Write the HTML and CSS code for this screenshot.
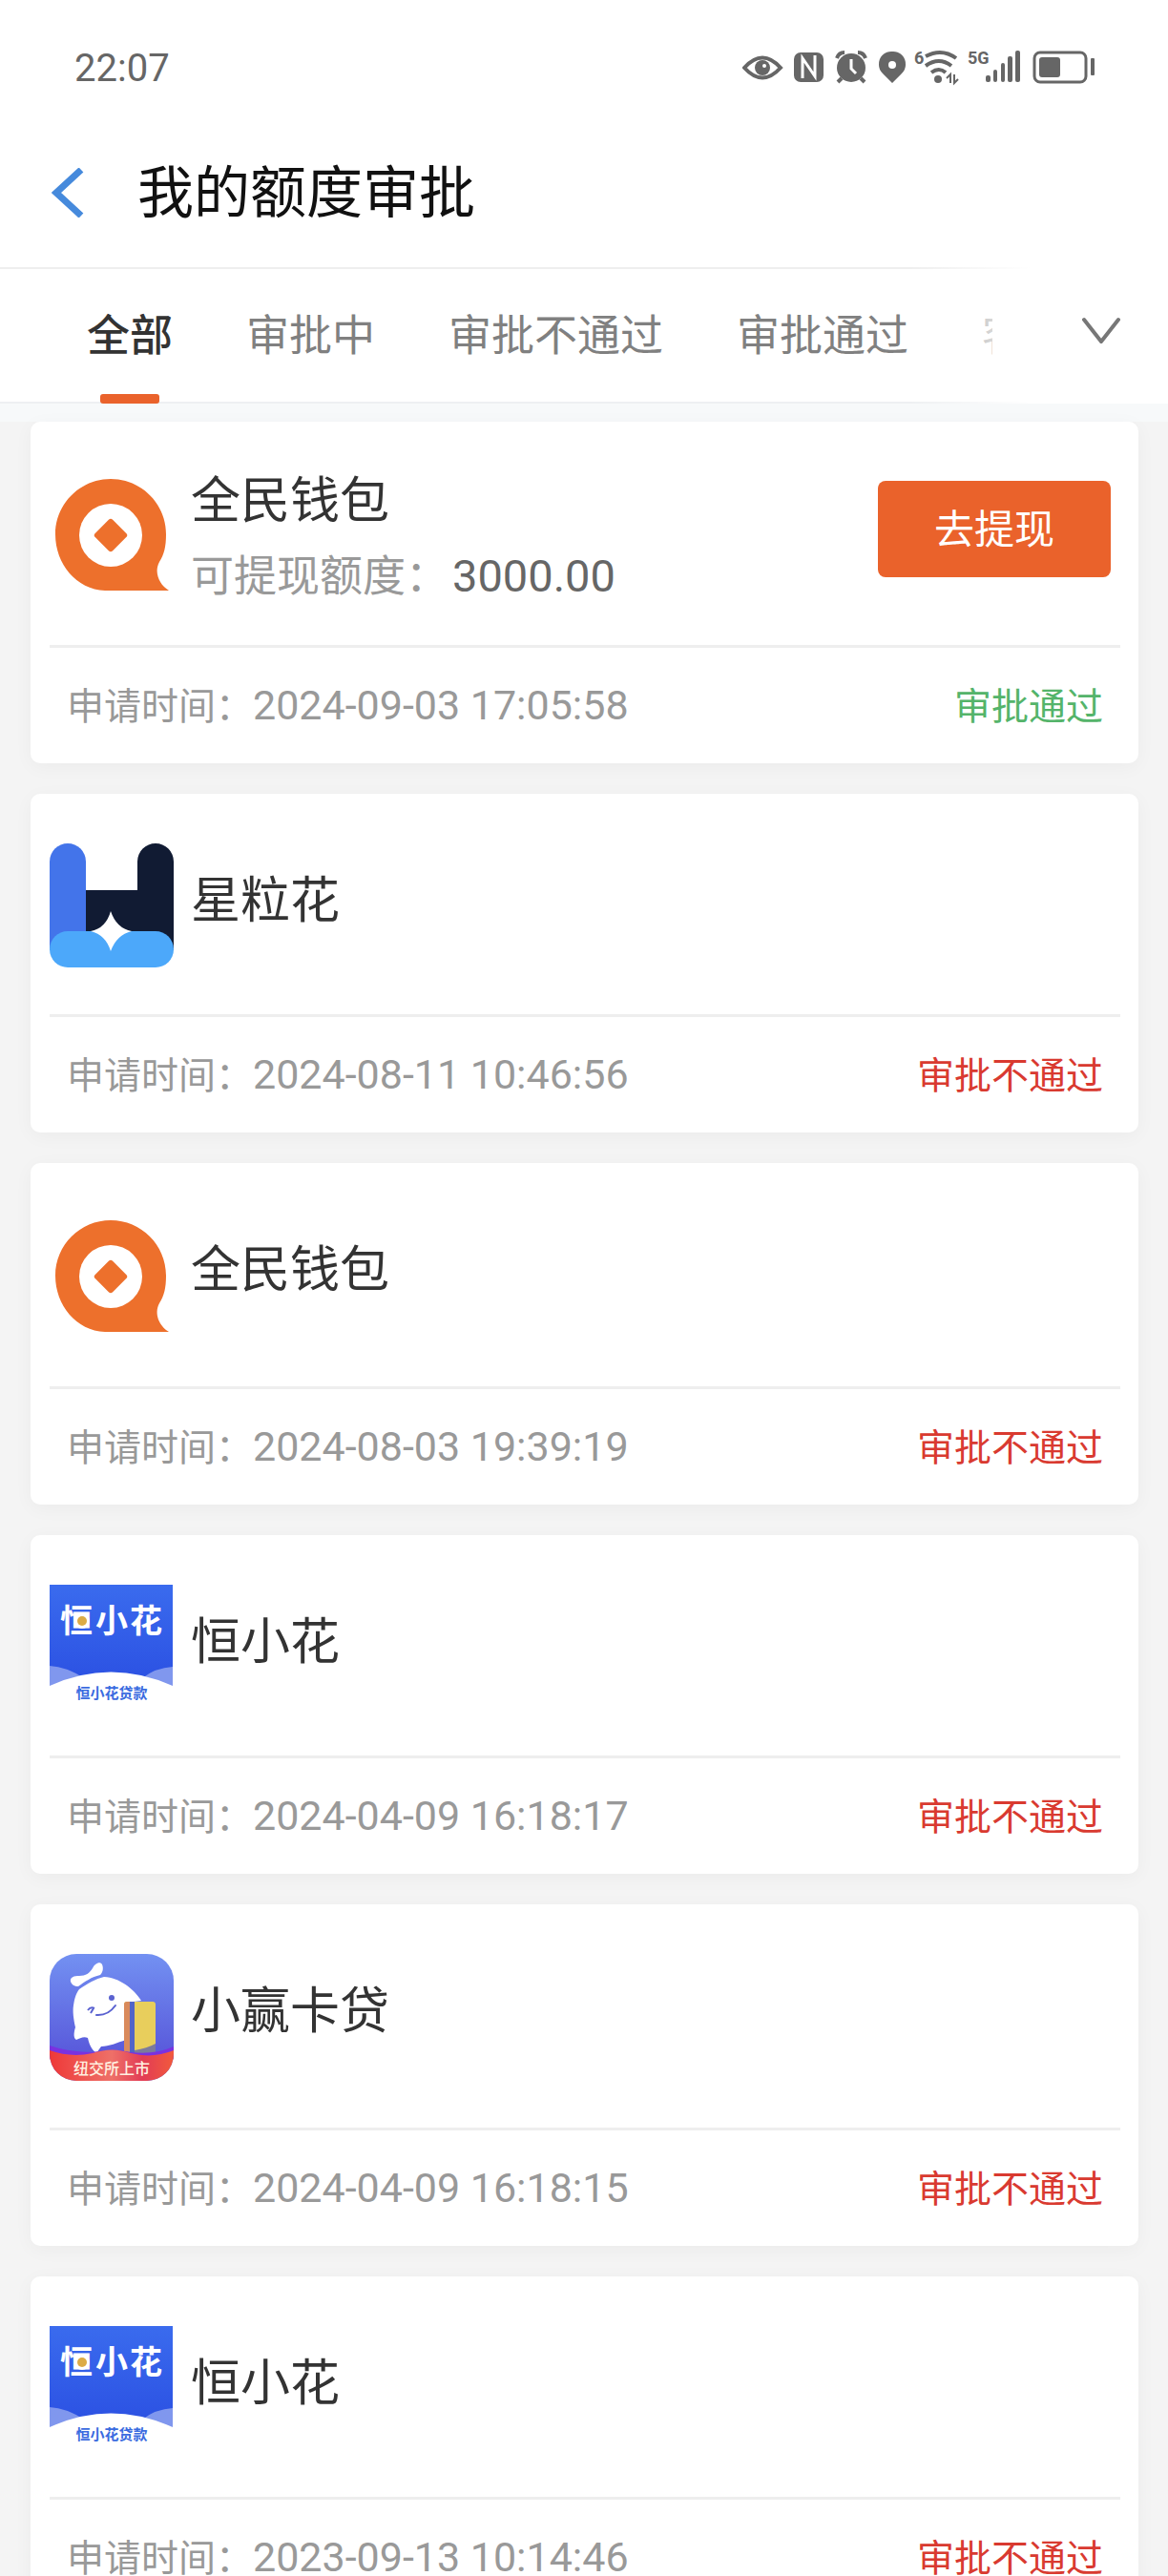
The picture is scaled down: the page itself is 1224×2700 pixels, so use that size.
FILE: index.html
```html
<!DOCTYPE html>
<html lang="zh-CN">

<head>
    <meta charset="UTF-8">
    <meta name="viewport" content="width=device-width, initial-scale=1">
    <title>我的额度审批</title>
    <link rel="stylesheet" href="styles.css">
</head>

<body>
    <!-- shared logos -->
    <svg class="defs" width="0" height="0" aria-hidden="true">
        <symbol id="logo-qm" viewBox="0 0 130 133">
            <path d="M64 8C96 8 122 34 122 66C122 79 120 87 115 95C109 106 115 119 125 125H58C28 124 6 97 6 66C6 34 32 8 64 8Z" fill="#ed702c"/>
            <circle cx="64" cy="67" r="33" fill="#fff"/>
            <rect x="51" y="54" width="26" height="26" rx="3" transform="rotate(45 64 67)" fill="#ed702c"/>
        </symbol>
        <symbol id="logo-xl" viewBox="0 0 130 130">
            <path d="M0 19A19 19 0 0 1 38 19V112H0Z" fill="#4374ea"/>
            <path d="M38 49H92V19A19 19 0 0 1 130 19V112H38Z" fill="#111b33"/>
            <rect y="92" width="130" height="38" rx="19" fill="#4ca8fa"/>
            <path d="M64 71Q70 89 86 92Q70 96 64 113Q59 96 43 92Q59 89 64 71Z" fill="#fff"/>
        </symbol>
        <symbol id="logo-hx" viewBox="0 0 130 130">
            <linearGradient id="hx-bg" x1="0" y1="0" x2="0" y2="1">
                <stop offset="0" stop-color="#3a6bee"/>
                <stop offset="1" stop-color="#2b50e2"/>
            </linearGradient>
            <rect width="129" height="106" fill="url(#hx-bg)"/>
            <path d="M0 85Q18 86 36 98V108H0Z" fill="#8097ee"/>
            <path d="M129 86Q111 87 97 98V108H129Z" fill="#8097ee"/>
            <path d="M0 106Q64 77 129 106V130H0Z" fill="#fff"/>
        </symbol>
        <symbol id="logo-xy" viewBox="0 0 130 133">
            <linearGradient id="xy-bg" x1="0" y1="0" x2="0" y2="1">
                <stop offset="0" stop-color="#7391f2"/>
                <stop offset="0.75" stop-color="#5a5cdc"/>
            </linearGradient>
            <linearGradient id="xy-red" x1="0" y1="0" x2="1" y2="0">
                <stop offset="0" stop-color="#ee3838"/>
                <stop offset="0.5" stop-color="#ee7068"/>
                <stop offset="0.75" stop-color="#e23c55"/>
                <stop offset="1" stop-color="#f25a3c"/>
            </linearGradient>
            <clipPath id="xy-clip"><rect width="130" height="133" rx="28"/></clipPath>
            <g clip-path="url(#xy-clip)">
                <rect width="130" height="133" fill="url(#xy-bg)"/>
                <path d="M22 29C21 24 26 23 31 23C38 23 42 20 45 15C47 10 53 7 55 11C57 16 55 20 53 22C44 24 37 29 30 34C26 34 23 32 22 29Z" fill="#fff"/>
                <path d="M31 37C40 31 48 26 57 24C73 25 88 36 96 49L80 51V90C71 93 62 97 54 97L49 104C45 101 42 97 40 88C36 86 32 88 28 90C24 88 26 80 27 77C25 68 24 60 25 54C26 46 28 41 31 37Z" fill="#fff"/>
                <path d="M49 64Q61 65 69 54" fill="none" stroke="#5a62d0" stroke-width="2" stroke-linecap="round"/>
                <path d="M40 59Q43 55 47 57M46 57L43 62" fill="none" stroke="#5a62d0" stroke-width="2"/>
                <circle cx="65" cy="46" r="3" fill="#5a62d0"/>
                <rect x="78" y="50" width="33" height="60" rx="3" fill="#e8ce5c"/>
                <path d="M81 50H85V110H78V53Q78 50 81 50Z" fill="#d98a5c"/>
                <path d="M84 50H89V110H84Z" fill="#5264c8"/>
                <path d="M89 101Q102 99 111 94V110H89Z" fill="#7c7b9c"/>
                <path d="M0 96Q20 103 45 103Q66 98 85 103Q110 106 130 97V110H0Z" fill="#7a31e0"/>
                <path d="M0 101Q22 109 45 104Q66 97 85 104Q108 110 130 101V133H0Z" fill="url(#xy-red)"/>
            </g>
        </symbol>
    </svg>

    <div class="status-bar">
        <span class="clock">22:07</span>
        <svg class="status-icons" width="372" height="40" viewBox="0 0 372 40" fill="#666">
            <!-- eye -->
            <path d="M2 20Q21 -1 40 20Q21 41 2 20Z" fill="none" stroke="#666" stroke-width="4"/>
            <circle cx="21" cy="20" r="8"/>
            <circle cx="23" cy="18" r="2" fill="#fff"/>
            <!-- nfc -->
            <rect x="54" y="4" width="31" height="31" rx="7"/>
            <path d="M63 31V10L76 29V7" fill="none" stroke="#fff" stroke-width="3"/>
            <!-- alarm -->
            <circle cx="114" cy="20" r="15"/>
            <path d="M99 10Q101 4 107 4M121 4Q127 4 129 10M104 31L100 35M124 31L128 35" fill="none" stroke="#666" stroke-width="4"/>
            <path d="M114 11V21L119 26" fill="none" stroke="#fff" stroke-width="3"/>
            <!-- location -->
            <path d="M157 3A13 13 0 0 1 171 17Q171 22 167 26L157 36L147 26Q143 22 143 17A13 13 0 0 1 157 3Z"/>
            <circle cx="157" cy="17" r="4" fill="#fff"/>
            <!-- wifi -->
            <text x="180" y="16" class="net">6</text>
            <path d="M192 8Q209 -1 224 10M192 18Q206 8 219 18M198 25Q206 19 213 25" fill="none" stroke="#666" stroke-width="4"/>
            <circle cx="205" cy="32" r="4"/>
            <path d="M214 31L218 27V36M222 27V36L226 32" fill="none" stroke="#666" stroke-width="2"/>
            <!-- mobile signal -->
            <text x="236" y="16" class="net">5G</text>
            <rect x="255" y="28" width="5" height="7" rx="2"/>
            <rect x="263" y="22" width="4" height="13" rx="2"/>
            <rect x="271" y="15" width="4" height="20" rx="2"/>
            <rect x="278" y="8" width="5" height="27" rx="2"/>
            <rect x="286" y="2" width="5" height="33" rx="2"/>
            <!-- battery -->
            <rect x="306" y="4" width="54" height="31" rx="6" fill="none" stroke="#666" stroke-width="3"/>
            <rect x="311" y="9" width="22" height="21" rx="3"/>
            <rect x="365" y="10" width="4" height="18" rx="1"/>
        </svg>
    </div>

    <header class="header">
        <button class="back" aria-label="返回">
            <svg width="36" height="52" viewBox="0 0 36 52"><path d="M31 2L5 26L31 50" fill="none" stroke="#468adc" stroke-width="7"/></svg>
        </button>
        <h1>我的额度审批</h1>
    </header>

    <nav class="tabs">
        <div class="tab-list">
            <a href="#" class="tab active">全部</a>
            <a href="#" class="tab">审批中</a>
            <a href="#" class="tab">审批不通过</a>
            <a href="#" class="tab">审批通过</a>
            <a href="#" class="tab">客户取消</a>
        </div>
        <button class="more" aria-label="展开">
            <svg width="42" height="28" viewBox="0 0 42 28"><path d="M3 3L21 26L39 3" fill="none" stroke="#777" stroke-width="4" stroke-linecap="round"/></svg>
        </button>
    </nav>

    <main class="list">
        <section class="card">
            <div class="card-body quota">
                <svg class="logo tall"><use href="#logo-qm"/></svg>
                <div class="info">
                    <h2>全民钱包</h2>
                    <p>可提现额度：<span class="amount">3000.00</span></p>
                </div>
                <button class="withdraw">去提现</button>
            </div>
            <div class="card-foot">
                <span>申请时间：<time>2024-09-03 17:05:58</time></span>
                <span class="pass">审批通过</span>
            </div>
        </section>

        <section class="card">
            <div class="card-body">
                <svg class="logo"><use href="#logo-xl"/></svg>
                <div class="info">
                    <h2>星粒花</h2>
                </div>
            </div>
            <div class="card-foot">
                <span>申请时间：<time>2024-08-11 10:46:56</time></span>
                <span class="fail">审批不通过</span>
            </div>
        </section>

        <section class="card">
            <div class="card-body">
                <svg class="logo tall"><use href="#logo-qm"/></svg>
                <div class="info">
                    <h2>全民钱包</h2>
                </div>
            </div>
            <div class="card-foot">
                <span>申请时间：<time>2024-08-03 19:39:19</time></span>
                <span class="fail">审批不通过</span>
            </div>
        </section>

        <section class="card">
            <div class="card-body">
                <svg class="logo">
                    <use href="#logo-hx"/>
                    <text x="28" y="50" class="hx-name">恒</text>
                    <text x="65" y="50" class="hx-name">小</text>
                    <text x="101" y="50" class="hx-name">花</text>
                    <circle cx="34" cy="38" r="8" fill="#fff"/>
                    <circle cx="34" cy="38" r="5" fill="#dcab45"/>
                    <text x="65" y="119" class="hx-sub">恒小花贷款</text>
                </svg>
                <div class="info">
                    <h2>恒小花</h2>
                </div>
            </div>
            <div class="card-foot">
                <span>申请时间：<time>2024-04-09 16:18:17</time></span>
                <span class="fail">审批不通过</span>
            </div>
        </section>

        <section class="card">
            <div class="card-body">
                <svg class="logo tall">
                    <use href="#logo-xy"/>
                    <text x="65" y="126" class="xy-sub">纽交所上市</text>
                </svg>
                <div class="info">
                    <h2>小赢卡贷</h2>
                </div>
            </div>
            <div class="card-foot">
                <span>申请时间：<time>2024-04-09 16:18:15</time></span>
                <span class="fail">审批不通过</span>
            </div>
        </section>

        <section class="card">
            <div class="card-body">
                <svg class="logo">
                    <use href="#logo-hx"/>
                    <text x="28" y="50" class="hx-name">恒</text>
                    <text x="65" y="50" class="hx-name">小</text>
                    <text x="101" y="50" class="hx-name">花</text>
                    <circle cx="34" cy="38" r="8" fill="#fff"/>
                    <circle cx="34" cy="38" r="5" fill="#dcab45"/>
                    <text x="65" y="119" class="hx-sub">恒小花贷款</text>
                </svg>
                <div class="info">
                    <h2>恒小花</h2>
                </div>
            </div>
            <div class="card-foot">
                <span>申请时间：<time>2023-09-13 10:14:46</time></span>
                <span class="fail">审批不通过</span>
            </div>
        </section>
    </main>
</body>

</html>
```
FILE: styles.css
```css
* {
    box-sizing: border-box;
    margin: 0;
    padding: 0;
}

html {
    height: 100%;
    overflow: hidden;
}

body {
    height: 100%;
    overflow: hidden;
    background: #f4f4f4;
    font-family: "Noto Sans CJK SC", sans-serif;
    color: #333;
}

button {
    border: none;
    background: none;
    font-family: inherit;
}

.defs {
    position: absolute;
}

/* status bar */
.status-bar {
    display: flex;
    justify-content: space-between;
    align-items: center;
    height: 142px;
    padding: 0 74px 0 78px;
    background: #fff;
}

.clock {
    font-family: Roboto, sans-serif;
    font-size: 40px;
    color: #666;
}

.net {
    font-family: "Liberation Sans Narrow", Roboto, sans-serif;
    font-size: 18px;
    font-weight: 700;
}

/* header */
.header {
    display: flex;
    align-items: center;
    height: 138px;
    padding: 0 54px 18px;
    background: #fff;
}

.back {
    width: 36px;
    height: 52px;
    margin-right: 54px;
}

.header h1 {
    padding-bottom: 8px;
    font-size: 59px;
    font-weight: 400;
    line-height: 88px;
    color: #111;
}

/* tabs */
.tabs {
    position: relative;
    display: flex;
    height: 143px;
    border-top: 2px solid #eee;
    border-bottom: 2px solid #eef0f2;
    background: #fff;
}

/* fades the lines and the last tab out towards the arrow */
.tabs::after {
    content: "";
    position: absolute;
    top: -2px;
    right: 0;
    bottom: -2px;
    width: 272px;
    background: linear-gradient(to right, rgba(255, 255, 255, 0), #fff 128px);
    pointer-events: none;
}

.tab-list {
    display: flex;
    flex: 1;
    gap: 77px;
    min-width: 0;
    margin-bottom: -2px;
    padding-left: 91px;
    overflow: hidden;
}

.tab {
    position: relative;
    flex: none;
    font-size: 45px;
    line-height: 134px;
    color: #808080;
    text-decoration: none;
}

.tab.active {
    font-weight: 500;
    color: #333;
}

.tab.active::after {
    content: "";
    position: absolute;
    left: 50%;
    bottom: 0;
    width: 62px;
    height: 10px;
    margin-left: -31px;
    border-radius: 3px;
    background: #ea622b;
}

.more {
    position: relative;
    z-index: 1;
    width: 184px;
    padding: 0 0 8px 44px;
}

/* cards */
.list {
    display: flex;
    flex-direction: column;
    gap: 32px;
    padding: 19px 31px 32px 32px;
    background: linear-gradient(#f7f9fa 19px, #f4f4f4 19px);
}

.card {
    padding: 0 19px 0 20px;
    border-radius: 10px;
    background: #fff;
    box-shadow: 0 4px 20px rgba(0, 0, 0, 0.04);
}

.card-body {
    display: flex;
    align-items: flex-start;
    padding: 52px 10px 49px 0;
    border-bottom: 3px solid #eee;
}

.logo {
    flex: none;
    width: 130px;
    height: 130px;
    margin-right: 18px;
}

.logo.tall {
    height: 133px;
}

.hx-name {
    font-size: 34px;
    font-weight: 700;
    text-anchor: middle;
    fill: #fff;
}

.hx-sub {
    font-size: 15px;
    font-weight: 700;
    text-anchor: middle;
    fill: #3a6be0;
}

.xy-sub {
    font-size: 16px;
    font-weight: 500;
    text-anchor: middle;
    fill: #fff0e0;
}

.info {
    flex: 1;
    padding-top: 29px;
}

.quota .info {
    padding-top: 0;
}

.info h2 {
    font-size: 52px;
    font-weight: 400;
    line-height: 54px;
}

.info p {
    display: flex;
    align-items: baseline;
    margin-top: 30px;
    font-size: 45px;
    line-height: 46px;
    color: #999;
}

.amount {
    margin-left: 4px;
    font-family: Roboto, sans-serif;
    font-size: 47px;
    color: #666;
}

.withdraw {
    width: 244px;
    height: 101px;
    margin-top: 10px;
    padding-bottom: 6px;
    border-radius: 8px;
    background: #ea622b;
    font-size: 42px;
    color: #fff;
}

.card-foot {
    display: flex;
    justify-content: space-between;
    align-items: center;
    height: 121px;
    padding: 0 18px 6px;
    font-size: 39px;
    color: #999;
}

.card-foot time {
    font-family: Roboto, sans-serif;
    font-size: 43px;
}

.pass {
    color: #54b46a;
}

.fail {
    color: #d93a30;
}
```
